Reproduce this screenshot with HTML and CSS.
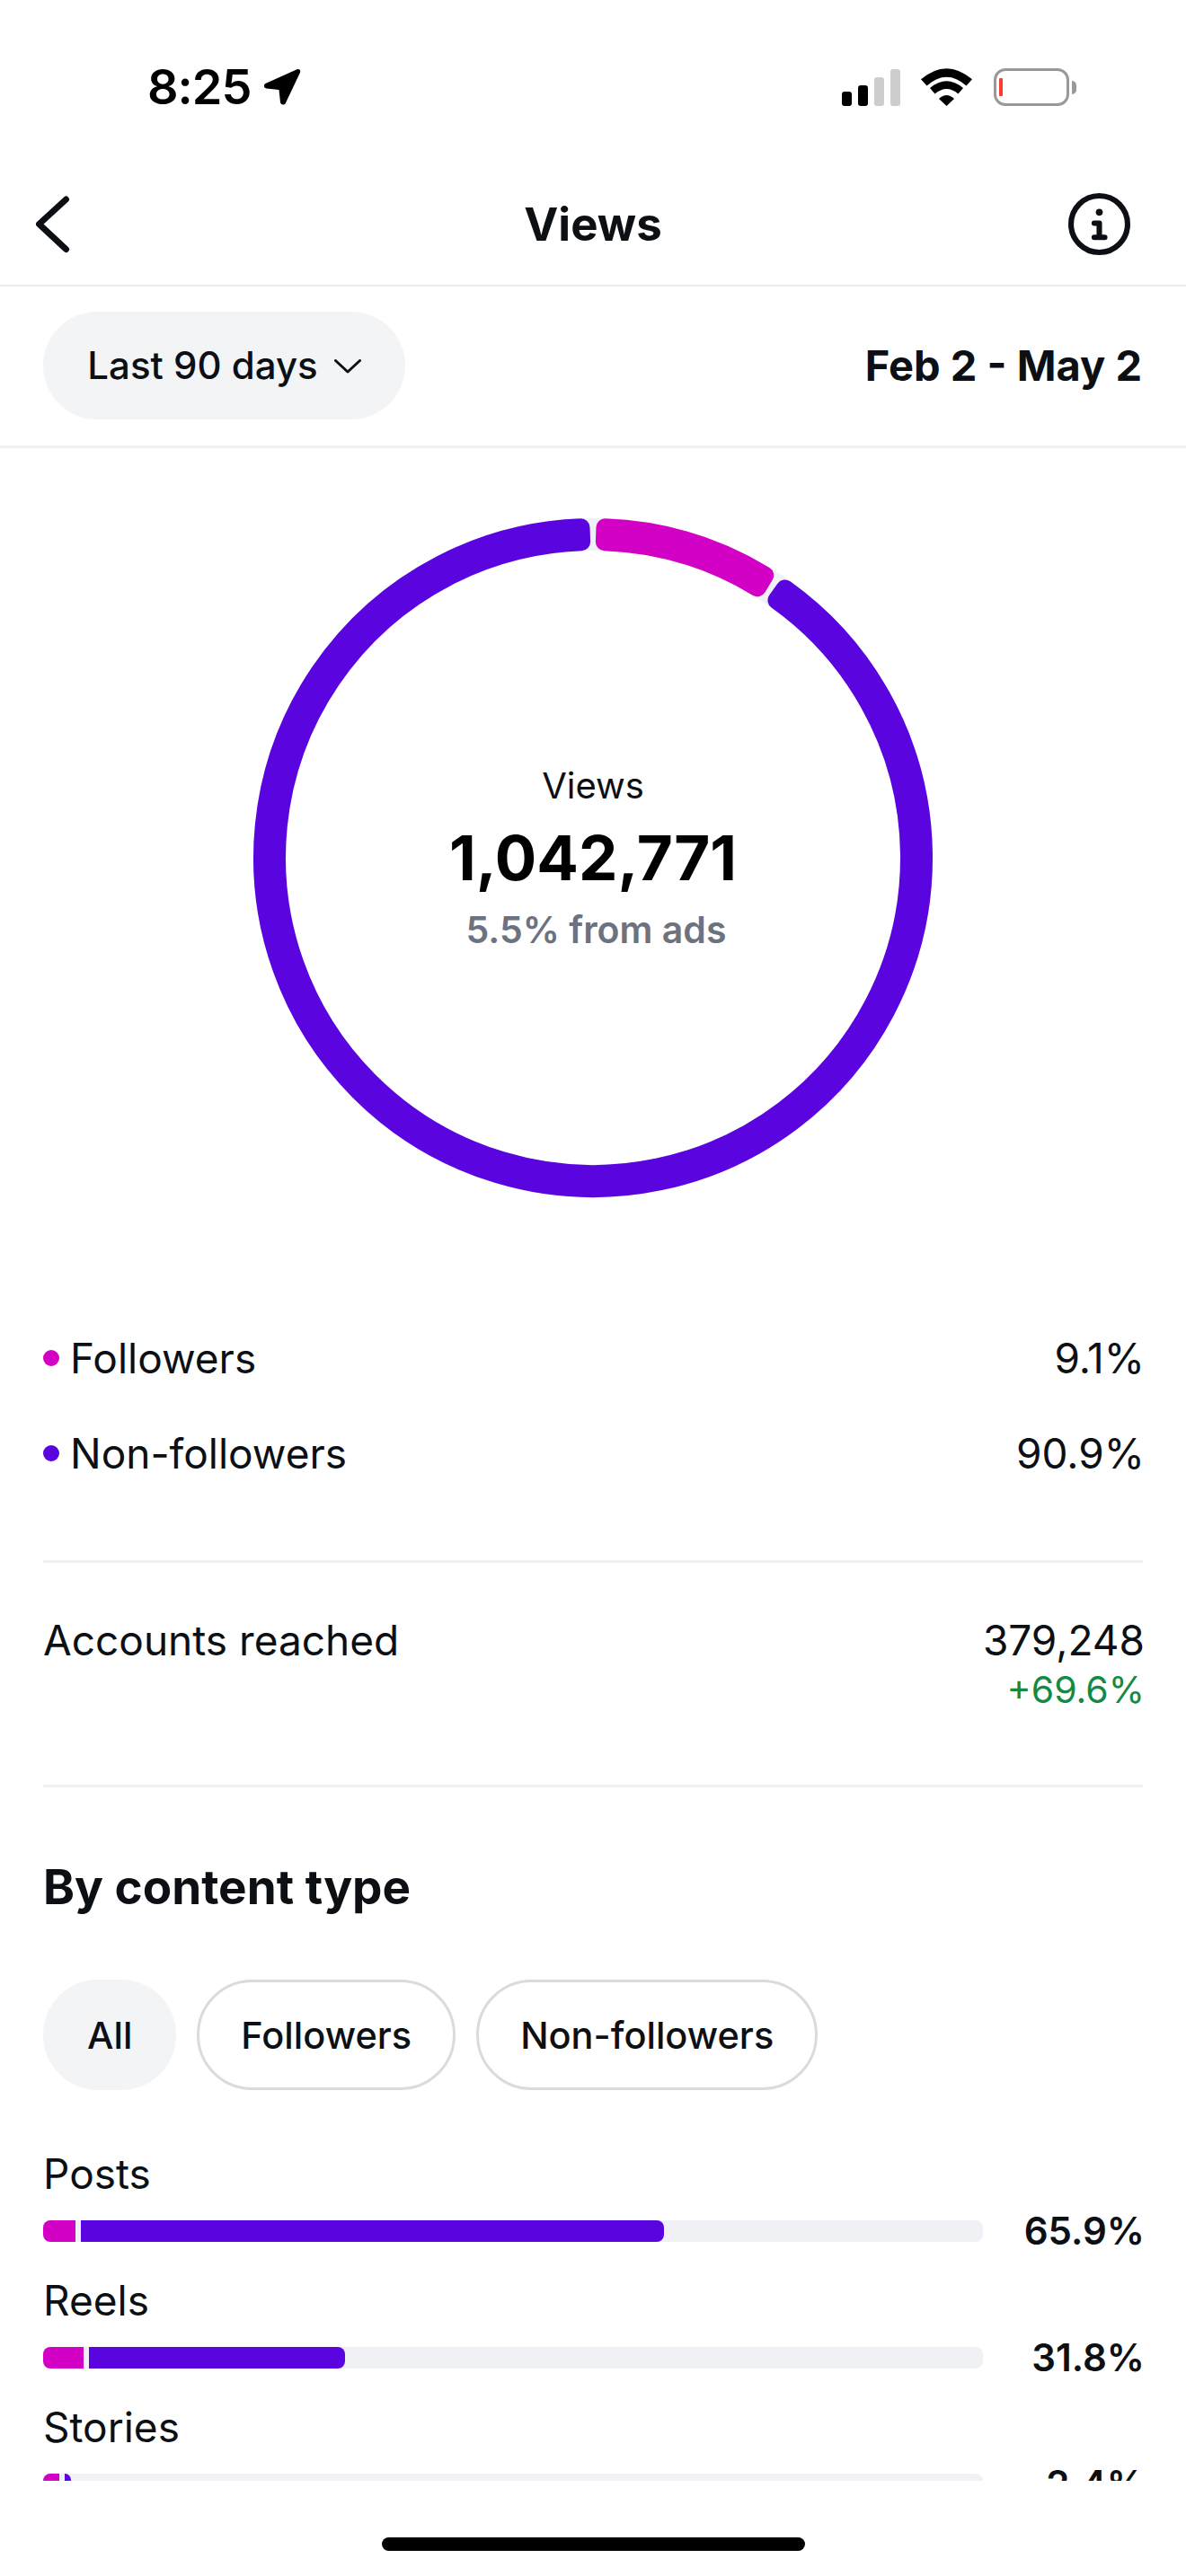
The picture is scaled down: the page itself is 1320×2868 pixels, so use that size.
FILE: index.html
```html
<!DOCTYPE html>
<html>
<head>
<meta charset="UTF-8" />
<title>Views</title>
<link rel="stylesheet" href="styles.css">
</head>
<body>
<div class="phone">

  <div class="status">
    <div class="status-left">
      <span class="clock">8:25</span>
      <svg class="arrow" width="42" height="42" viewBox="0 0 42 42"><path d="M37.5 1.2C40 .2 42 2.2 41 4.7L25 38.5C23.8 41.5 19.5 41 19 38L17.5 24L3.5 22.5C.3 22 0 18 3 16.8Z"/></svg>
    </div>
    <div class="status-right">
      <div class="signal">
        <i class="sig1"></i><i class="sig2"></i><i class="sig3"></i><i class="sig4"></i>
      </div>
      <svg class="wifi" width="57" height="42" viewBox="0 0 57 42"><path d="M0 12.3Q28.5 -12 57 12.3L50.5 19.5Q28.5 0 6.5 19.5Z"/><path d="M10 22Q28.5 6.5 47 22L41.5 28.5Q28.5 17.5 15.5 28.5Z"/><path d="M20 34Q28.5 26 37 34L28.5 42Z"/></svg>
      <div class="battery"><div class="battery-level"></div></div>
      <div class="battery-nub"></div>
    </div>
  </div>

  <div class="nav">
    <svg class="back" width="40" height="66" viewBox="0 0 40 66"><path d="M33.5 5L3.5 32.5L33.5 60.5"/></svg>
    <h1 class="title">Views</h1>
    <svg class="info" width="69" height="69" viewBox="0 0 68 68">
      <circle cx="34" cy="34" r="31" class="info-ring"/>
      <circle cx="34" cy="21" r="3.8" class="info-dot"/>
      <path d="M28.5 33H34V48M28.5 48.5H40" class="info-stem"/>
    </svg>
  </div>

  <div class="filter">
    <div class="range">
      <span>Last 90 days</span>
      <svg width="30" height="16" viewBox="0 0 30 16"><path d="M1.5 1.5L15 14L28.5 1.5"/></svg>
    </div>
    <div class="dates">Feb 2 - May 2</div>
  </div>

  <div class="main">
    <div class="donut">
      <svg width="760" height="760" viewBox="0 0 760 760">
        <circle cx="380" cy="380" r="360" class="donut-track"/>
        <path class="seg seg-purple" d="M593.70 80.40A368 368 0 1 1 366.52 12.25L367.10 28.24A352 352 0 1 0 584.41 93.43Z"/>
        <path class="seg seg-pink" d="M393.48 12.25A368 368 0 0 1 571.18 65.56L562.87 79.23A352 352 0 0 0 392.90 28.24Z"/>
      </svg>
      <div class="donut-text">
        <div class="donut-label">Views</div>
        <div class="donut-num">1,042,771</div>
        <div class="donut-sub">5.5% from ads</div>
      </div>
    </div>

    <div class="legend">
      <div class="legend-row">
        <div class="legend-name"><span class="dot dot-pink"></span>Followers</div>
        <div>9.1%</div>
      </div>
      <div class="legend-row">
        <div class="legend-name"><span class="dot dot-purple"></span>Non-followers</div>
        <div>90.9%</div>
      </div>
    </div>

    <div class="line line-one"></div>

    <div class="reached">
      <div>Accounts reached</div>
      <div class="reached-right">
        <div>379,248</div>
        <div class="up">+69.6%</div>
      </div>
    </div>

    <div class="line line-two"></div>

    <h2 class="heading">By content type</h2>

    <div class="tabs">
      <div class="tab tab-on">All</div>
      <div class="tab">Followers</div>
      <div class="tab">Non-followers</div>
    </div>

    <div class="types">
      <div class="type">
        <div class="type-name">Posts</div>
        <div class="type-row">
          <div class="bar">
            <div class="bar-pink" style="width:36px"></div>
            <div class="bar-purple" style="width:649px"></div>
          </div>
          <div class="type-val">65.9%</div>
        </div>
      </div>
      <div class="type">
        <div class="type-name">Reels</div>
        <div class="type-row">
          <div class="bar">
            <div class="bar-pink" style="width:45px"></div>
            <div class="bar-purple" style="width:285px"></div>
          </div>
          <div class="type-val">31.8%</div>
        </div>
      </div>
      <div class="type">
        <div class="type-name">Stories</div>
        <div class="type-row">
          <div class="bar">
            <div class="bar-pink" style="width:18px"></div>
            <div class="bar-purple" style="width:7px"></div>
          </div>
          <div class="type-val">2.4%</div>
        </div>
      </div>
    </div>
  </div>

  <div class="home"><div class="home-bar"></div></div>

</div>
</body>
</html>
```

FILE: styles.css
```css
* {
	box-sizing: border-box;
}

body {
	margin: 0;
	padding: 0;
	background: #FFF;
	color: #0C1014;
	font: 46px/56px Inter, "Noto Sans", "Liberation Sans", sans-serif;
}

h1, h2 {
	margin: 0;
}

.phone {
	width: 1320px;
	height: 2868px;
	overflow: hidden;
	display: flex;
	flex-direction: column;
}

/* status bar */
.status {
	height: 182px;
	flex: none;
	padding: 75px 122px 0 164px;
	display: flex;
	justify-content: space-between;
	align-items: flex-start;
}

.status-left {
	display: flex;
	align-items: center;
	gap: 14px;
	height: 43px;
}

.clock {
	font-size: 54px;
	line-height: 43px;
	font-weight: 600;
	color: #000;
	letter-spacing: -1px;
}

.arrow path {
	fill: #000;
}

.status-right {
	display: flex;
	align-items: flex-end;
	height: 43px;
}

.signal {
	display: flex;
	align-items: flex-end;
	gap: 7px;
	margin-right: 23px;
}

.signal i {
	display: block;
	width: 11px;
	border-radius: 3px;
	background: #CDCDCD;
}

.signal .sig1 {
	height: 16px;
	background: #000;
}

.signal .sig2 {
	height: 23px;
	background: #000;
}

.signal .sig3 {
	height: 32px;
}

.signal .sig4 {
	height: 41px;
}

.wifi {
	margin-right: 24px;
}

.wifi path {
	fill: #000;
}

.battery {
	width: 84px;
	height: 42px;
	border: 3px solid #999;
	border-radius: 13px;
	padding: 8px 3px;
}

.battery-level {
	width: 4px;
	height: 100%;
	border-radius: 1px;
	background: #FF3B30;
}

.battery-nub {
	width: 5px;
	height: 15px;
	margin: 0 0 13px 3px;
	border-radius: 0 8px 8px 0;
	background: #999;
}

/* top bar */
.nav {
	height: 137px;
	flex: none;
	padding: 0 40px;
	border-bottom: 2px solid #ECECF0;
	display: grid;
	grid-template-columns: 1fr auto 1fr;
	align-items: center;
}

.back path {
	fill: none;
	stroke: #0C1014;
	stroke-width: 7;
	stroke-linecap: round;
	stroke-linejoin: round;
}

.title {
	font-size: 51px;
	line-height: 60px;
	font-weight: 700;
}

.info {
	justify-self: end;
	margin-right: 22px;
}

.info-ring {
	fill: none;
	stroke: #0C1014;
	stroke-width: 6;
}

.info-dot {
	fill: #0C1014;
}

.info-stem {
	fill: none;
	stroke: #0C1014;
	stroke-width: 6;
	stroke-linecap: round;
	stroke-linejoin: round;
}

.filter {
	height: 180px;
	flex: none;
	padding: 28px 49px 29px 48px;
	border-bottom: 3px solid #F0F1F4;
	display: flex;
	align-items: center;
	justify-content: space-between;
}

.range {
	width: 403px;
	height: 120px;
	border-radius: 60px;
	background: #F3F4F6;
	display: flex;
	align-items: center;
	justify-content: center;
	gap: 18px;
	font-size: 42px;
	font-weight: 500;
}

.range svg {
	margin-top: 2px;
}

.range path {
	fill: none;
	stroke: #0C1014;
	stroke-width: 3;
	stroke-linecap: round;
	stroke-linejoin: round;
}

.dates {
	font-size: 47px;
	font-weight: 700;
}

/* scrolling part */
.main {
	height: 2263px;
	flex: none;
	overflow: hidden;
	padding: 0 46px 0 48px;
}

.donut {
	position: relative;
	width: 760px;
	height: 760px;
	margin: 76px 0 0 232px;
}

.donut svg {
	display: block;
}

.donut-track {
	fill: none;
	stroke: #EEF1F5;
	stroke-width: 36;
}

.seg {
	stroke-width: 20;
	stroke-linejoin: round;
}

.seg-purple {
	fill: #5A05E0;
	stroke: #5A05E0;
}

.seg-pink {
	fill: #D300C5;
	stroke: #D300C5;
}

.donut-text {
	position: absolute;
	top: 0;
	left: 0;
	right: 0;
	bottom: 0;
	display: flex;
	flex-direction: column;
	align-items: center;
	justify-content: center;
}

.donut-label {
	font-size: 40px;
	line-height: 50px;
}

.donut-num {
	font-size: 69px;
	line-height: 110px;
	font-weight: 700;
	color: #000;
}

.donut-sub {
	font-size: 41px;
	line-height: 50px;
	font-weight: 600;
	color: #6B7280;
	margin-left: 7px;
}

.legend {
	margin-top: 124px;
}

.legend-row {
	height: 106px;
	display: flex;
	align-items: center;
	justify-content: space-between;
}

.legend-name {
	display: flex;
	align-items: center;
}

.dot {
	width: 18px;
	height: 18px;
	border-radius: 50%;
	margin-right: 12px;
}

.dot-pink {
	background: #D300C5;
}

.dot-purple {
	background: #5A05E0;
}

.line {
	height: 3px;
	margin-right: 2px;
	background: #F0F1F4;
}

.line-one {
	margin-top: 66px;
}

.line-two {
	margin-top: 78px;
}

.reached {
	margin-top: 58px;
	display: flex;
	justify-content: space-between;
}

.reached-right {
	text-align: right;
}

.up {
	font-size: 41px;
	line-height: 55px;
	color: #128A44;
}

.heading {
	margin-top: 81px;
	font-size: 53px;
	line-height: 60px;
	font-weight: 700;
}

.tabs {
	margin-top: 73px;
	display: flex;
	gap: 23px;
}

.tab {
	height: 123px;
	padding: 0 46px;
	border: 3px solid #DBDBDB;
	border-radius: 62px;
	display: flex;
	align-items: center;
	font-size: 41.5px;
	font-weight: 500;
}

.tab-on {
	background: #F3F4F6;
	border-color: #F3F4F6;
}

.types {
	margin-top: 65px;
}

.type {
	margin-bottom: 13px;
}

.type-row {
	height: 72px;
	display: flex;
	align-items: center;
	justify-content: space-between;
}

.bar {
	width: 1046px;
	height: 24px;
	border-radius: 8px;
	background: #F0F1F5;
	overflow: hidden;
	display: flex;
	gap: 6px;
}

.bar-pink {
	background: #D300C5;
}

.bar-purple {
	background: #5A05E0;
	border-radius: 0 8px 8px 0;
}

.type-val {
	font-size: 42px;
	font-weight: 600;
}

.home {
	flex: 1;
	padding-top: 63px;
	display: flex;
	justify-content: center;
}

.home-bar {
	width: 471px;
	height: 15px;
	border-radius: 8px;
	background: #000;
}
```
